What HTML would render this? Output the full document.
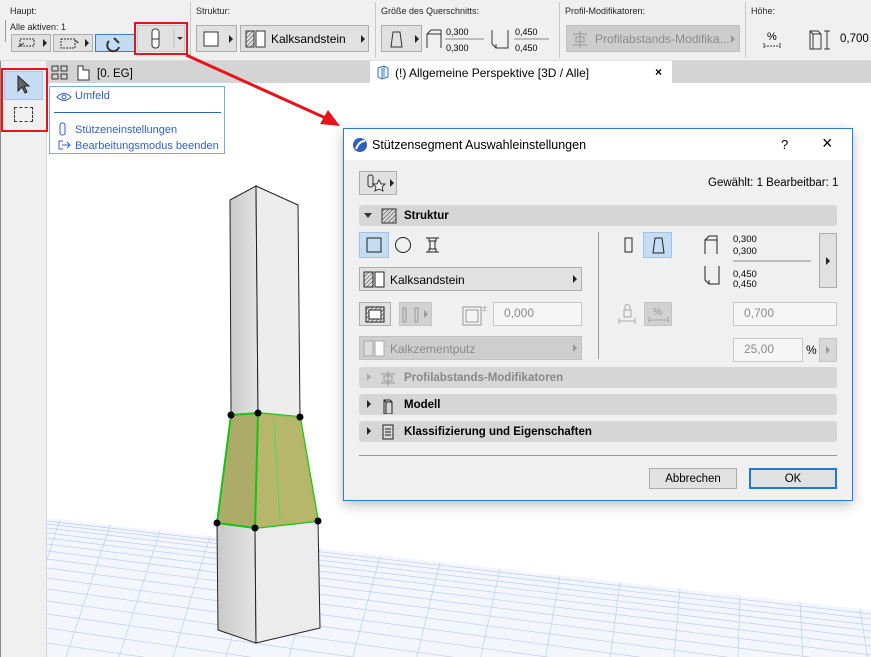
<!DOCTYPE html>
<html><head><meta charset="utf-8">
<style>
*{box-sizing:border-box;margin:0;padding:0}
html,body{width:871px;height:657px;overflow:hidden}
body{position:relative;background:#fff;font-family:"Liberation Sans",sans-serif;font-size:11px;color:#000}
.a{position:absolute}
.btn{position:absolute;background:#e1e1e1;border:1px solid #adadad}
.lbl{position:absolute;font-size:9px;color:#222}
.sep{position:absolute;top:2px;width:1px;height:56px;background:#c8c8c8}
.tri{position:absolute;width:0;height:0;border-top:4px solid transparent;border-bottom:4px solid transparent;border-left:4px solid #222}
.sec{position:absolute;left:359px;width:478px;height:21px;background:#d6d6d6;border-radius:3px}
.sec span{position:absolute;left:45px;top:5px;font-weight:bold;font-size:11.5px}
.inp{position:absolute;background:#f6f6f6;border:1px solid #c8c8c8;color:#8a8a8a;font-size:12px;padding:3px 0 0 10px}
</style></head><body>
<!-- toolbar -->
<div class="a" style="left:0;top:0;width:871px;height:61px;background:#f0f0f0;border-bottom:1px solid #ddd"></div>
<div class="lbl" style="left:10px;top:6px">Haupt:</div>
<div class="lbl" style="left:10px;top:22px">Alle aktiven: 1</div>
<div class="a" style="left:5px;top:20px;width:1px;height:22px;background:#999"></div>
<div class="btn" style="left:11px;top:34px;width:40px;height:18px"><svg width="40" height="18"><rect x="8" y="4" width="14" height="7" fill="none" stroke="#333" stroke-dasharray="2,1"/><path d="M6 12l6-4" stroke="#333"/></svg><div class="tri" style="left:31px;top:4px"></div></div>
<div class="btn" style="left:53px;top:34px;width:40px;height:18px"><svg width="40" height="18"><rect x="7" y="4" width="14" height="9" fill="none" stroke="#333" stroke-dasharray="2,1"/><path d="M21 4l4 4-2 0" fill="#333"/></svg><div class="tri" style="left:31px;top:4px"></div></div>
<div class="a" style="left:95px;top:34px;width:40px;height:18px;background:#c4dcf2;border:1px solid #3d7bc4"><svg width="40" height="18"><path d="M13 6a6 6 0 1 0 10 6" fill="none" stroke="#333" stroke-width="2"/><path d="M18 3l5 5" stroke="#333" stroke-width="2"/></svg></div>
<div class="a" style="left:134px;top:22px;width:54px;height:33px;border:2px solid #e8141a"></div>
<div class="btn" style="left:137px;top:25px;width:48px;height:27px;border-color:#c5c5c5"><svg width="48" height="27"><rect x="14" y="3" width="7" height="19" rx="3" fill="#fff" stroke="#333"/><line x1="14" y1="13" x2="21" y2="13" stroke="#333"/><line x1="36" y1="3" x2="36" y2="22" stroke="#bbb"/><path d="M39 11h6l-3 3z" fill="#333"/></svg></div>
<div class="sep" style="left:190px"></div>
<div class="lbl" style="left:196px;top:6px">Struktur:</div>
<div class="btn" style="left:196px;top:25px;width:41px;height:27px"><svg width="41" height="27"><rect x="7" y="6" width="14" height="14" fill="#fff" stroke="#333"/></svg><div class="tri" style="left:32px;top:9px"></div></div>
<div class="btn" style="left:240px;top:25px;width:129px;height:27px"><svg width="30" height="27"><rect x="5" y="5" width="8" height="16" fill="url(#h)" stroke="#333"/><rect x="15" y="5" width="9" height="16" fill="#fff" stroke="#333"/><defs><pattern id="h" width="3" height="3" patternUnits="userSpaceOnUse" patternTransform="rotate(45)"><line x1="0" y1="0" x2="0" y2="3" stroke="#333"/></pattern></defs></svg><span class="a" style="left:30px;top:6px;font-size:12px">Kalksandstein</span><div class="tri" style="left:120px;top:9px"></div></div>
<div class="sep" style="left:375px"></div>
<div class="lbl" style="left:381px;top:6px">Größe des Querschnitts:</div>
<div class="btn" style="left:381px;top:25px;width:41px;height:27px"><svg width="41" height="27"><path d="M11 6h7l2 15h-11z" fill="none" stroke="#333"/></svg><div class="tri" style="left:33px;top:9px"></div></div>
<svg class="a" style="left:424px;top:26px" width="130" height="28"><path d="M3 22V8l4-4h10v18M3 8h14" fill="none" stroke="#333"/><text x="22" y="9" font-size="9">0,300</text><line x1="21" y1="13" x2="60" y2="13" stroke="#888"/><text x="22" y="25" font-size="9">0,300</text><path d="M68 4v14l4 4h12v-18M72 22v-4" fill="none" stroke="#333"/><text x="91" y="9" font-size="9">0,450</text><line x1="90" y1="13" x2="125" y2="13" stroke="#888"/><text x="91" y="25" font-size="9">0,450</text></svg>
<div class="sep" style="left:559px"></div>
<div class="lbl" style="left:565px;top:6px">Profil-Modifikatoren:</div>
<div class="a" style="left:566px;top:25px;width:174px;height:27px;background:#cdcdcd;border:1px solid #c0c0c0"><svg width="26" height="27"><path d="M6 8h14M6 19h14M13 5v17M9 11h8v5H9z" fill="none" stroke="#999"/></svg><span class="a" style="left:28px;top:6px;font-size:12px;color:#8a8a8a">Profilabstands-Modifika...</span><div class="tri" style="left:164px;top:9px;border-left-color:#999"></div></div>
<div class="sep" style="left:745px"></div>
<div class="lbl" style="left:751px;top:6px">Höhe:</div>
<svg class="a" style="left:760px;top:26px" width="110" height="28"><text x="7" y="14" font-size="11">%</text><path d="M4 20h16M4 17v6M20 17v6" stroke="#333" stroke-dasharray="2,1" fill="none"/><path d="M50 5h8l3 3v15h-11zM50 5l3 3v15M53 8h8" fill="none" stroke="#333"/><path d="M67 5v18M64 5h6M64 23h6" stroke="#333" fill="none"/><text x="80" y="16" font-size="11.5">0,700</text></svg>
<!-- tab bar -->
<div class="a" style="left:47px;top:61px;width:824px;height:22px;background:#d4d4d4"></div>
<svg class="a" style="left:50px;top:64px" width="110" height="18"><rect x="2" y="2" width="6" height="5" fill="none" stroke="#333"/><rect x="11" y="2" width="6" height="5" fill="none" stroke="#333"/><rect x="2" y="10" width="6" height="5" fill="none" stroke="#333"/><rect x="11" y="10" width="6" height="5" fill="none" stroke="#333"/><path d="M28 2h5v4h6v10H28z" fill="#fff" stroke="#333"/><text x="47" y="13" font-size="11.5">[0. EG]</text></svg>
<div class="a" style="left:370px;top:61px;width:302px;height:22px;background:#fff"></div>
<svg class="a" style="left:376px;top:64px" width="14" height="16"><path d="M2 4l6-2 4 2v9l-6 2-4-2z M8 2v11 M6 15v-11" fill="none" stroke="#2a6ed2"/></svg>
<span class="a" style="left:395px;top:66px;font-size:12px">(!) Allgemeine Perspektive [3D / Alle]</span>
<span class="a" style="left:655px;top:65px;font-size:12px;font-weight:bold">×</span>
<!-- left toolbox -->
<div class="a" style="left:0;top:61px;width:47px;height:596px;background:#f0f0f0;border-right:1px solid #d8d8d8"></div>
<div class="a" style="left:0;top:61px;width:1px;height:596px;background:#888"></div>
<div class="a" style="left:4px;top:71px;width:39px;height:29px;background:#c5dcf3;border:1px solid #a9c9ea"></div>
<svg class="a" style="left:16px;top:74px" width="14" height="22"><path d="M2 2v15l4-4 3 6 2-1-3-6h5z" fill="#666" stroke="#222"/></svg>
<div class="a" style="left:14px;top:107px;width:19px;height:15px;border:1px dashed #333"></div>
<div class="a" style="left:1px;top:68px;width:47px;height:64px;border:2px solid #e8141a"></div>
<!-- popup menu -->
<div class="a" style="left:49px;top:86px;width:176px;height:68px;background:#fff;border:1px solid #7aa7e6"></div>
<svg class="a" style="left:56px;top:91px" width="16" height="12"><path d="M1 6q7-7 14 0q-7 7-14 0z" fill="none" stroke="#2f62c9"/><circle cx="8" cy="6" r="2" fill="none" stroke="#2f62c9"/></svg>
<span class="a" style="left:75px;top:90px;color:#2f62c9;font-size:11px">Umfeld</span>
<div class="a" style="left:54px;top:112px;width:167px;height:1px;background:#2f62c9"></div>
<svg class="a" style="left:58px;top:122px" width="10" height="14"><rect x="2" y="1" width="5" height="12" rx="2" fill="none" stroke="#2f62c9"/></svg>
<span class="a" style="left:75px;top:124px;color:#2f62c9;font-size:11px">Stützeneinstellungen</span>
<svg class="a" style="left:57px;top:139px" width="14" height="12"><path d="M6 2H2v8h4M5 6h8M10 3l3 3-3 3" fill="none" stroke="#2f62c9"/></svg>
<span class="a" style="left:75px;top:140px;color:#2f62c9;font-size:11px">Bearbeitungsmodus beenden</span>
<!-- 3d scene -->
<svg class="a" style="left:0;top:0" width="871" height="657">
<defs><clipPath id="fl"><polygon points="47,518 871,610 871,657 47,657"/></clipPath>
<linearGradient id="gs" x1="0" x2="1"><stop offset="0" stop-color="#c9c9c9"/><stop offset="1" stop-color="#e4e4e4"/></linearGradient></defs>
<polygon points="47,518 871,610 871,657 47,657" fill="#f3f6fd"/>
<g clip-path="url(#fl)" stroke="#bccdf3" stroke-width="0.7" fill="none">
<line x1="47" y1="521" x2="871" y2="614"/><line x1="47" y1="524" x2="871" y2="619"/><line x1="47" y1="528" x2="871" y2="625"/><line x1="47" y1="533" x2="871" y2="631"/><line x1="47" y1="538" x2="871" y2="638"/><line x1="47" y1="544" x2="871" y2="646"/><line x1="47" y1="551" x2="871" y2="655"/><line x1="47" y1="559" x2="871" y2="665"/><line x1="47" y1="568" x2="871" y2="676"/><line x1="47" y1="578" x2="871" y2="688"/><line x1="47" y1="589" x2="871" y2="701"/><line x1="47" y1="601" x2="871" y2="715"/><line x1="47" y1="614" x2="871" y2="730"/><line x1="47" y1="628" x2="871" y2="746"/><line x1="47" y1="643" x2="871" y2="763"/>
<line x1="60" y1="519" x2="15" y2="660"/><line x1="110" y1="525" x2="65" y2="660"/><line x1="160" y1="531" x2="118" y2="660"/><line x1="210" y1="536" x2="172" y2="660"/><line x1="260" y1="542" x2="225" y2="660"/><line x1="320" y1="549" x2="288" y2="660"/><line x1="380" y1="556" x2="352" y2="660"/><line x1="440" y1="562" x2="416" y2="660"/><line x1="500" y1="569" x2="480" y2="660"/><line x1="560" y1="576" x2="545" y2="660"/><line x1="620" y1="582" x2="610" y2="660"/><line x1="680" y1="589" x2="674" y2="660"/><line x1="740" y1="596" x2="738" y2="660"/><line x1="800" y1="602" x2="803" y2="660"/><line x1="860" y1="609" x2="868" y2="660"/>
</g>
<polygon points="230,200 256,186 258,413 231,415" fill="url(#gs)" stroke="#222" stroke-width="1"/>
<polygon points="256,186 298,205 300,417 258,413" fill="#ededed" stroke="#222" stroke-width="1"/>
<polygon points="217,523 255,528 256,643 218,630" fill="url(#gs)" stroke="#222"/>
<polygon points="255,528 318,521 320,628 256,643" fill="#ececec" stroke="#222"/>
<polygon points="231,415 258,413 300,417 318,521 255,528 217,523" fill="#9e9e4e" fill-opacity="0.85" stroke="#16c216" stroke-width="2"/>
<polygon points="258,413 300,417 318,521 255,528" fill="#bcbc6c" fill-opacity="0.7"/>
<line x1="258" y1="413" x2="255" y2="528" stroke="#16c216" stroke-width="2"/>
<line x1="274" y1="420" x2="280" y2="520" stroke="#5ad25a" stroke-width="1"/>
<g fill="#000"><circle cx="231" cy="415" r="3.5"/><circle cx="258" cy="413" r="3.5"/><circle cx="300" cy="417" r="3.5"/><circle cx="217" cy="523" r="3.5"/><circle cx="255" cy="528" r="3.5"/><circle cx="318" cy="521" r="3.5"/></g>
<line x1="186" y1="55" x2="330" y2="120" stroke="#e8141a" stroke-width="3"/>
<polygon points="340,126 320,124 328,110" fill="#e8141a"/>
</svg>
<!-- dialog -->
<div class="a" style="left:343px;top:128px;width:510px;height:373px;background:#f0f0f0;border:1px solid #2b7ad6;box-shadow:0 4px 12px rgba(0,0,0,.25)"></div>
<div class="a" style="left:344px;top:129px;width:508px;height:31px;background:#fff"></div>
<svg class="a" style="left:352px;top:137px" width="16" height="16"><circle cx="8" cy="8" r="7" fill="#2d5fc0"/><path d="M4 12q3-8 9-8" stroke="#fff" stroke-width="2" fill="none"/></svg>
<span class="a" style="left:372px;top:138px;font-size:12.5px">Stützensegment Auswahleinstellungen</span>
<span class="a" style="left:781px;top:137px;font-size:13px">?</span>
<span class="a" style="left:822px;top:133px;font-size:18px;font-weight:300">×</span>
<div class="btn" style="left:359px;top:171px;width:38px;height:24px"><svg width="38" height="24"><rect x="8" y="3" width="5" height="12" rx="2" fill="none" stroke="#333"/><path d="M19 8l2 4 4 0-3 3 1 4-4-2-4 2 1-4-3-3 4 0z" fill="#fff" stroke="#333"/></svg><div class="tri" style="left:30px;top:7px"></div></div>
<span class="a" style="left:708px;top:177px;font-size:11.5px">Gewählt: 1 Bearbeitbar: 1</span>
<div class="sec" style="top:205px"><div class="a" style="left:5px;top:8px;border-left:4px solid transparent;border-right:4px solid transparent;border-top:5px solid #333"></div><svg class="a" style="left:22px;top:3px" width="16" height="16"><rect x="1" y="1" width="14" height="14" fill="url(#h)" stroke="#333"/></svg><span>Struktur</span></div>
<div class="a" style="left:359px;top:232px;width:30px;height:26px;background:#c5dcf3;border:1px solid #9ec4ec"></div>
<svg class="a" style="left:359px;top:232px" width="90" height="26"><rect x="8" y="6" width="14" height="14" fill="none" stroke="#222"/><circle cx="44" cy="13" r="7.5" fill="none" stroke="#222"/><path d="M67 6h13M67 20h13M70 6v3h7V6M70 20v-3h7v3M71 9v8M76 9v8" fill="none" stroke="#222"/></svg>
<div class="a" style="left:598px;top:232px;width:1px;height:127px;background:#999"></div>
<svg class="a" style="left:620px;top:232px" width="60" height="26"><rect x="5" y="6" width="7" height="14" fill="none" stroke="#222"/></svg>
<div class="a" style="left:643px;top:232px;width:29px;height:26px;background:#c5dcf3;border:1px solid #9ec4ec"><svg width="29" height="26"><path d="M11 5h7l2 15h-11z" fill="none" stroke="#222"/></svg></div>
<svg class="a" style="left:703px;top:232px" width="110" height="58"><path d="M2 22V8l4-4h8v18M2 8h12" fill="none" stroke="#222"/><text x="30" y="10" font-size="9.5">0,300</text><text x="30" y="22" font-size="9.5">0,300</text><line x1="30" y1="29" x2="108" y2="29" stroke="#888"/><path d="M2 34v14l4 4h10v-18M6 52v-4" fill="none" stroke="#222"/><text x="30" y="45" font-size="9.5">0,450</text><text x="30" y="55" font-size="9.5">0,450</text></svg>
<div class="btn" style="left:819px;top:233px;width:18px;height:55px"><div class="tri" style="left:6px;top:23px"></div></div>
<div class="btn" style="left:359px;top:267px;width:223px;height:24px"><svg width="34" height="22"><rect x="4" y="4" width="9" height="15" fill="url(#h)" stroke="#222"/><rect x="15" y="4" width="9" height="15" fill="#fff" stroke="#222"/></svg><span class="a" style="left:30px;top:5px;font-size:12px">Kalksandstein</span><div class="tri" style="left:213px;top:7px"></div></div>
<div class="btn" style="left:359px;top:302px;width:32px;height:24px"><svg width="32" height="24"><rect x="6" y="4" width="18" height="15" fill="url(#h)" stroke="#222"/><rect x="9" y="7" width="12" height="9" fill="#fff" stroke="#222"/></svg></div>
<div class="a" style="left:399px;top:302px;width:33px;height:24px;background:#d1d1d1;border:1px solid #c5c5c5"><svg width="33" height="24"><rect x="3" y="5" width="3" height="14" fill="none" stroke="#999"/><rect x="15" y="5" width="3" height="14" fill="none" stroke="#999"/></svg><div class="tri" style="left:24px;top:7px;border-left-color:#999"></div></div>
<svg class="a" style="left:462px;top:302px" width="30" height="24"><rect x="1" y="5" width="18" height="18" fill="#f4f4f4" stroke="#999"/><rect x="4" y="8" width="12" height="12" fill="none" stroke="#999"/><text x="20" y="9" font-size="9" fill="#999">±</text></svg>
<div class="inp" style="left:493px;top:302px;width:89px;height:24px">0,000</div>
<svg class="a" style="left:617px;top:302px" width="60" height="26"><rect x="7" y="8" width="7" height="7" fill="none" stroke="#aaa"/><path d="M8 8v-3a2.5 2.5 0 0 1 5 0v3M2 19h16M2 16v6M18 16v6" fill="none" stroke="#aaa"/></svg>
<div class="a" style="left:644px;top:302px;width:28px;height:24px;background:#d1d1d1;border:1px solid #c5c5c5"><svg width="28" height="24"><text x="8" y="12" font-size="10" fill="#999">%</text><path d="M4 17h19M4 14v6M23 14v6" stroke="#999" stroke-dasharray="2,1" fill="none"/></svg></div>
<div class="inp" style="left:733px;top:302px;width:104px;height:24px">0,700</div>
<div class="a" style="left:359px;top:336px;width:223px;height:24px;background:#cecece;border:1px solid #c2c2c2"><svg width="34" height="22"><rect x="4" y="4" width="9" height="15" fill="#ddd" stroke="#aaa"/><rect x="15" y="4" width="9" height="15" fill="#fff" stroke="#aaa"/></svg><span class="a" style="left:30px;top:5px;font-size:12px;color:#8a8a8a">Kalkzementputz</span><div class="tri" style="left:213px;top:7px;border-left-color:#999"></div></div>
<div class="inp" style="left:733px;top:338px;width:70px;height:24px">25,00</div>
<span class="a" style="left:806px;top:343px;font-size:12px">%</span>
<div class="a" style="left:819px;top:338px;width:18px;height:24px;background:#d8d8d8;border:1px solid #c5c5c5"><div class="tri" style="left:6px;top:7px;border-left-color:#999"></div></div>
<div class="sec" style="top:367px"><div class="tri" style="left:8px;top:6px;border-left-color:#aaa"></div><svg class="a" style="left:21px;top:3px" width="16" height="16"><path d="M1 4h14M1 13h14M8 1v15M4 6h8v5H4z" fill="none" stroke="#999"/></svg><span style="color:#888">Profilabstands-Modifikatoren</span></div>
<div class="sec" style="top:394px"><div class="tri" style="left:8px;top:6px"></div><svg class="a" style="left:22px;top:2px" width="14" height="18"><path d="M3 4h6l2 2v12H3zM3 4l2 2v12M5 6h6" fill="none" stroke="#222"/></svg><span>Modell</span></div>
<div class="sec" style="top:421px"><div class="tri" style="left:8px;top:6px"></div><svg class="a" style="left:22px;top:2px" width="14" height="18"><rect x="2" y="2" width="10" height="14" fill="none" stroke="#222"/><path d="M4 6h6M4 9h6M4 12h6" stroke="#222"/></svg><span>Klassifizierung und Eigenschaften</span></div>
<div class="a" style="left:359px;top:455px;width:478px;height:1px;background:#999"></div>
<div class="btn" style="left:649px;top:468px;width:88px;height:21px;text-align:center;padding-top:4px;font-size:11.5px">Abbrechen</div>
<div class="a" style="left:749px;top:468px;width:88px;height:21px;background:#e1e1e1;border:2px solid #1a7ad6;text-align:center;padding-top:3px;font-size:11.5px">OK</div>
</body></html>
